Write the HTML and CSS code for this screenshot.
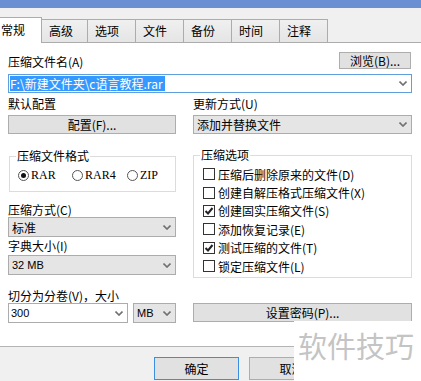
FILE: index.html
```html
<!DOCTYPE html>
<html lang="zh-CN">
<head>
    <meta charset="UTF-8">
    <meta name="viewport" content="width=device-width, initial-scale=1.0">
    <title>压缩文件名和参数</title>
    <link rel="stylesheet" href="styles.css">
</head>
<body>
    <div class="titlebar"></div>

    <div class="tabs">
        <div class="tab active">常规</div>
        <div class="tab">高级</div>
        <div class="tab">选项</div>
        <div class="tab">文件</div>
        <div class="tab">备份</div>
        <div class="tab">时间</div>
        <div class="tab">注释</div>
    </div>

    <div class="panel">
        <div class="file-row">
            <span class="label">压缩文件名(A)</span>
            <button class="btn browse">浏览(B)...</button>
        </div>
        <div class="combo focus">
            <span class="selected">F:\新建文件夹\c语言教程.rar</span>
            <svg class="arrow" width="8" height="5" viewBox="0 0 8 5"><path d="M0.5 0.5 L4 4 L7.5 0.5" fill="none" stroke="#707070" stroke-width="1.6"/></svg>
        </div>

        <div class="cols">
            <div class="col">
                <div class="label">默认配置</div>
                <button class="btn wide first-control">配置(F)...</button>

                <fieldset class="group format">
                    <legend>压缩文件格式</legend>
                    <div class="radios">
                        <div class="radio"><span class="circle on"></span>RAR</div>
                        <div class="radio"><span class="circle"></span>RAR4</div>
                        <div class="radio"><span class="circle"></span>ZIP</div>
                    </div>
                </fieldset>

                <div class="label method-label">压缩方式(C)</div>
                <div class="select tall">
                    <span>标准</span>
                    <svg class="arrow" width="8" height="5" viewBox="0 0 8 5"><path d="M0.5 0.5 L4 4 L7.5 0.5" fill="none" stroke="#707070" stroke-width="1.6"/></svg>
                </div>
                <div class="label dict-label">字典大小(I)</div>
                <div class="select tall dict">
                    <span class="num">32 MB</span>
                    <svg class="arrow" width="8" height="5" viewBox="0 0 8 5"><path d="M0.5 0.5 L4 4 L7.5 0.5" fill="none" stroke="#707070" stroke-width="1.6"/></svg>
                </div>
            </div>

            <div class="col">
                <div class="label">更新方式(U)</div>
                <div class="select first-control">
                    <span>添加并替换文件</span>
                    <svg class="arrow" width="8" height="5" viewBox="0 0 8 5"><path d="M0.5 0.5 L4 4 L7.5 0.5" fill="none" stroke="#707070" stroke-width="1.6"/></svg>
                </div>

                <fieldset class="group options">
                    <legend>压缩选项</legend>
                    <div class="check"><span class="box"></span>压缩后删除原来的文件(D)</div>
                    <div class="check"><span class="box"></span>创建自解压格式压缩文件(X)</div>
                    <div class="check"><span class="box"><svg width="10" height="10" viewBox="0 0 10 10"><path d="M1.5 5 L4 7.5 L8.5 2" fill="none" stroke="#222" stroke-width="2"/></svg></span>创建固实压缩文件(S)</div>
                    <div class="check"><span class="box"></span>添加恢复记录(E)</div>
                    <div class="check"><span class="box"><svg width="10" height="10" viewBox="0 0 10 10"><path d="M1.5 5 L4 7.5 L8.5 2" fill="none" stroke="#222" stroke-width="2"/></svg></span>测试压缩的文件(T)</div>
                    <div class="check"><span class="box"></span>锁定压缩文件(L)</div>
                </fieldset>
            </div>
        </div>

        <div class="cols split">
            <div>
                <div class="label">切分为分卷(V)，大小</div>
                <div class="split-controls">
                    <div class="combo volume">
                        <span class="num">300</span>
                        <svg class="arrow" width="8" height="5" viewBox="0 0 8 5"><path d="M0.5 0.5 L4 4 L7.5 0.5" fill="none" stroke="#707070" stroke-width="1.6"/></svg>
                    </div>
                    <div class="select tall unit">
                        <span class="num">MB</span>
                        <svg class="arrow" width="8" height="5" viewBox="0 0 8 5"><path d="M0.5 0.5 L4 4 L7.5 0.5" fill="none" stroke="#707070" stroke-width="1.6"/></svg>
                    </div>
                </div>
            </div>
            <button class="btn password">设置密码(P)...</button>
        </div>
    </div>

    <div class="footer">
        <button class="btn dialog default">确定</button>
        <button class="btn dialog">取消</button>
    </div>

    <div class="watermark">软件技巧</div>
</body>
</html>
```

FILE: styles.css
```css
body {
    margin: 0;
    width: 421px;
    height: 381px;
    overflow: hidden;
    position: relative;
    background-color: #f0f0f0;
    font-family: "Noto Sans CJK SC", sans-serif;
    font-size: 12px;
    color: #000;
}

.titlebar {
    height: 8px;
    background-color: #6a8fd2;
}

.tabs {
    height: 34px;
    display: flex;
    align-items: flex-end;
    margin-left: -9px;
}

.tab {
    box-sizing: border-box;
    width: 49px;
    height: 23px;
    margin-left: -1px;
    padding-left: 7px;
    line-height: 22px;
    border: 1px solid #acacac;
    border-bottom: none;
    background: linear-gradient(#f0f0f0, #e5e5e5);
}

.tab:nth-child(2) {
    width: 47px;
}

.tab.active {
    position: relative;
    z-index: 1;
    width: 51px;
    height: 26px;
    margin-left: 0;
    margin-bottom: -1px;
    padding-left: 9px;
    line-height: 24px;
    background: #fff;
}

.panel {
    background: #fff;
    border-top: 1px solid #acacac;
    border-bottom: 1px solid #b4b4b4;
    padding: 9px 9px 23px 8px;
}

.label {
    display: block;
    height: 14px;
    line-height: 14px;
    white-space: nowrap;
}

.file-row {
    height: 17px;
    display: flex;
    justify-content: space-between;
    align-items: flex-end;
}

.btn {
    display: block;
    box-sizing: border-box;
    height: 19px;
    padding: 0;
    border: 1px solid #adadad;
    background-color: #e1e1e1;
    font-family: "Noto Sans CJK SC", sans-serif;
    font-size: 12px;
    line-height: 15px;
    color: #000;
}

.browse {
    width: 72px;
    height: 17px;
    margin-right: 1px;
}

.combo,
.select {
    box-sizing: border-box;
    height: 19px;
    display: flex;
    justify-content: space-between;
    align-items: center;
    padding: 0 4px 0 3px;
    border: 1px solid #acacac;
    background-color: #e5e5e5;
    white-space: nowrap;
}

.combo {
    background-color: #fff;
}

.combo.focus {
    margin-top: 5px;
    padding-left: 1px;
    border-color: #5e9fdc;
}

.selected {
    background-color: #3399ff;
    color: #fff;
    line-height: 15px;
    padding-right: 2px;
}

.arrow {
    flex-shrink: 0;
}

.num {
    font-family: "Liberation Sans", Arial, sans-serif;
    font-size: 11px;
}

.cols {
    display: grid;
    grid-template-columns: 168px 219px;
    column-gap: 17px;
    margin-top: 4px;
}

.first-control {
    margin-top: 4px;
}

.wide {
    width: 100%;
}

.group {
    margin: 0;
    padding: 0 0 0 6px;
    min-width: 0;
    border: 1px solid #dcdcdc;
}

.group legend {
    padding: 0 1px;
    line-height: 14px;
}

.format {
    margin: 15px 0 0 1px;
    padding-bottom: 9px;
}

.radios {
    display: grid;
    grid-template-columns: 54px 55px auto;
    margin-top: 5px;
    padding-left: 2px;
    height: 14px;
    line-height: 14px;
}

.radio {
    display: flex;
    align-items: center;
    gap: 2px;
    font-family: "Liberation Serif", serif;
    font-size: 12px;
}

.circle {
    box-sizing: border-box;
    width: 11px;
    height: 11px;
    border: 1px solid #555;
    border-radius: 50%;
    background: #fff;
    display: flex;
    align-items: center;
    justify-content: center;
}

.circle.on::after {
    content: "";
    width: 5px;
    height: 5px;
    border-radius: 50%;
    background: #111;
}

.method-label {
    margin-top: 11px;
}

.dict-label {
    margin-top: 2px;
}

.select.tall,
.combo.volume {
    height: 20px;
}

.dict {
    margin-top: 2px;
}

.options {
    margin-top: 14px;
    padding-bottom: 2px;
}

.check {
    height: 18.4px;
    display: flex;
    align-items: center;
    white-space: nowrap;
}

.check:first-of-type {
    margin-top: 3px;
}

.box {
    box-sizing: border-box;
    width: 12px;
    height: 12px;
    margin: 0 3px 0 3px;
    border: 1px solid #333;
    background: #fff;
    display: flex;
    align-items: center;
    justify-content: center;
}

.split {
    margin-top: 11px;
}

.split-controls {
    display: flex;
    gap: 5px;
}

.volume {
    width: 120px;
    padding-left: 2px;
}

.unit {
    flex: 1;
}

.password {
    align-self: end;
    width: 100%;
    margin-bottom: 1px;
}

.footer {
    display: flex;
    gap: 10px;
    padding: 10px 0 0 154px;
}

.dialog {
    width: 85px;
    height: 23px;
}

.default {
    border-color: #3c8ee0;
}

.watermark {
    position: absolute;
    left: 294px;
    top: 321px;
    right: 0;
    bottom: 0;
    background: #fff;
    color: #c4c4c4;
    font-size: 29px;
    line-height: 36px;
    padding: 6px 0 0 4px;
    white-space: nowrap;
}
```
